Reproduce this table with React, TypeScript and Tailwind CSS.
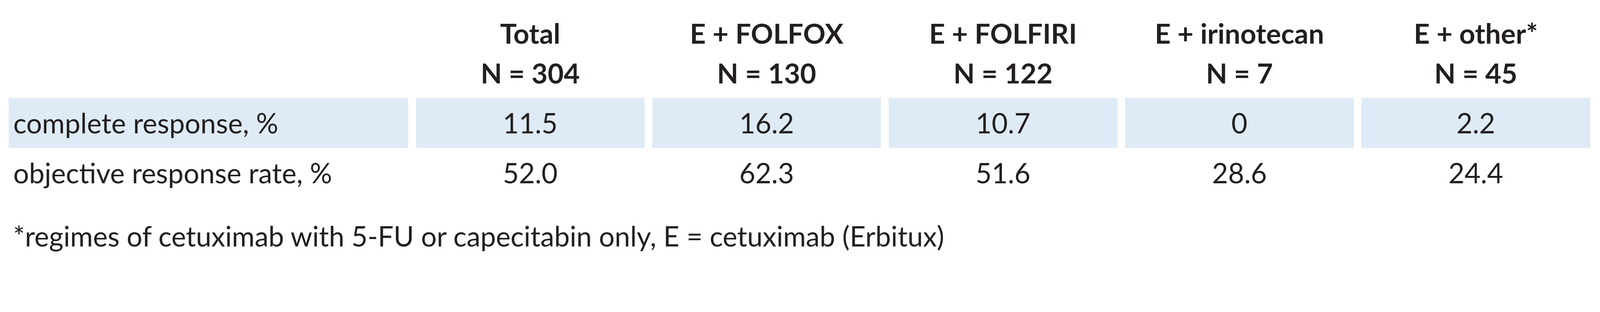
const columns = [
  { title: "Total", n: "N = 304" },
  { title: "E + FOLFOX", n: "N = 130" },
  { title: "E + FOLFIRI", n: "N = 122" },
  { title: "E + irinotecan", n: "N = 7" },
  { title: "E + other*", n: "N = 45" },
];

const rows = [
  { label: "complete response, %", values: ["11.5", "16.2", "10.7", "0", "2.2"], shaded: true },
  { label: "objective response rate, %", values: ["52.0", "62.3", "51.6", "28.6", "24.4"], shaded: false },
];

export default function App() {
  return (
    <div className="h-[710px] w-full bg-white pl-[22px] pt-[34px] font-['Lato','Open_Sans',sans-serif] text-[71px] text-[#231f20]">
      <div className="grid w-[4049px] grid-cols-[1023px_repeat(5,minmax(0,1fr))] gap-x-[19.5px]">
        <div />
        {columns.map((c) => (
          <div key={c.title} className="whitespace-nowrap pb-[13px] text-center font-bold leading-[102px]">
            <div>{c.title}</div>
            <div>{c.n}</div>
          </div>
        ))}

        {rows.map((r) => (
          <div key={r.label} className="contents">
            <div
              className={`h-[128px] whitespace-nowrap pl-[12px] leading-[128px] ${r.shaded ? "bg-[#deebf7]" : ""}`}
            >
              {r.label}
            </div>
            {r.values.map((v, i) => (
              <div
                key={i}
                className={`h-[128px] text-center leading-[128px] ${r.shaded ? "bg-[#deebf7]" : ""}`}
              >
                {v}
              </div>
            ))}
          </div>
        ))}
      </div>

      <p className="mt-[34px] whitespace-nowrap pl-[11.5px] leading-[128px]">
        *regimes of cetuximab with 5-FU or capecitabin only, E = cetuximab (Erbitux)
      </p>
    </div>
  );
}
